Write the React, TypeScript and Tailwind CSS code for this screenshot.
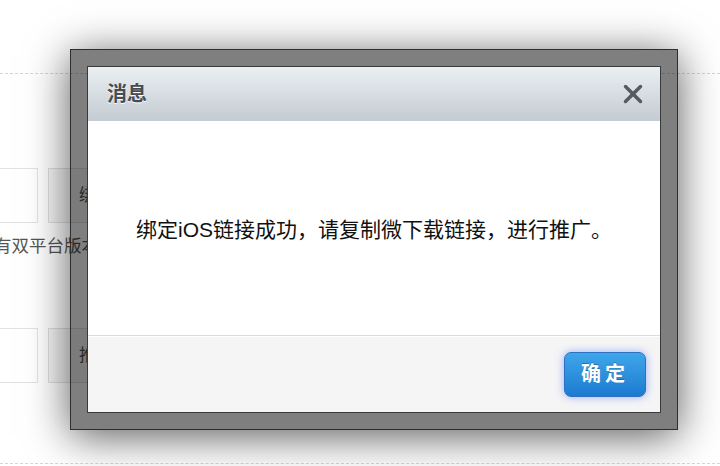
import { X } from 'lucide-react'

const font = { fontFamily: '"Liberation Sans", "Noto Sans CJK SC", sans-serif' }

function FormRow({ label }: { label: string }) {
  return (
    <div className="flex h-[55px] gap-[10px]">
      <div className="-ml-[82px] w-[120px] border border-[#e2e2e2] bg-white" />
      <div className="flex w-[110px] items-center border border-[#dedede] bg-[#f6f6f6] pl-[30px] text-[17px] text-[#555]">
        {label}
      </div>
    </div>
  )
}

export default function App() {
  return (
    <div className="relative h-[466px] w-[720px] overflow-hidden bg-white" style={font}>
      {/* page behind the dialog */}
      <div className="pt-[73px]">
        <div className="border-t border-dashed border-[#d6d6d6]" />
        <div className="mt-[94px]">
          <FormRow label="绑定" />
        </div>
        <div className="-ml-[6px] mt-[11px] text-[17.5px] leading-[25px] text-[#555]">
          有双平台版本的应用
        </div>
        <div className="mt-[69px]">
          <FormRow label="推广" />
        </div>
        <div className="mt-[80px] border-t border-dashed border-[#d6d6d6]" />
      </div>

      {/* dialog */}
      <div className="absolute left-[70px] top-[49px] h-[381px] w-[608px] border border-[#2e2e2e] bg-black/50 p-[16px] shadow-[0_6px_40px_rgba(0,0,0,0.65)]">
        <div className="flex h-full flex-col border border-[#3a3a3a] bg-white">
          <div className="flex h-[54px] items-center justify-between bg-gradient-to-b from-[#eaf0f2] to-[#c4cbd2] pl-[19px] pr-[12px]">
            <span className="text-[20px] font-bold text-[#474c52] [text-shadow:0_1px_0_#fff]">消息</span>
            <X size={30} strokeWidth={2.8} className="text-[#565b61]" />
          </div>
          <div className="flex flex-1 items-center justify-center pt-[4px] text-[21px] text-[#111]">
            绑定iOS链接成功，请复制微下载链接，进行推广。
          </div>
          <div className="flex h-[77px] items-center justify-end border-t border-[#dcdcdc] bg-[#f5f5f5] pr-[14px] shadow-[inset_0_1px_0_#fff]">
            <button className="h-[45px] w-[82px] rounded-[7px] border border-[#2d6fc0] bg-gradient-to-b from-[#3ea6ea] to-[#1d7bcf] text-[20px] font-bold tracking-[4px] text-white shadow-[0_0_8px_rgba(80,110,255,0.55)] [text-shadow:0_-1px_0_rgba(0,0,0,0.25)]">
              确定
            </button>
          </div>
        </div>
      </div>
    </div>
  )
}
